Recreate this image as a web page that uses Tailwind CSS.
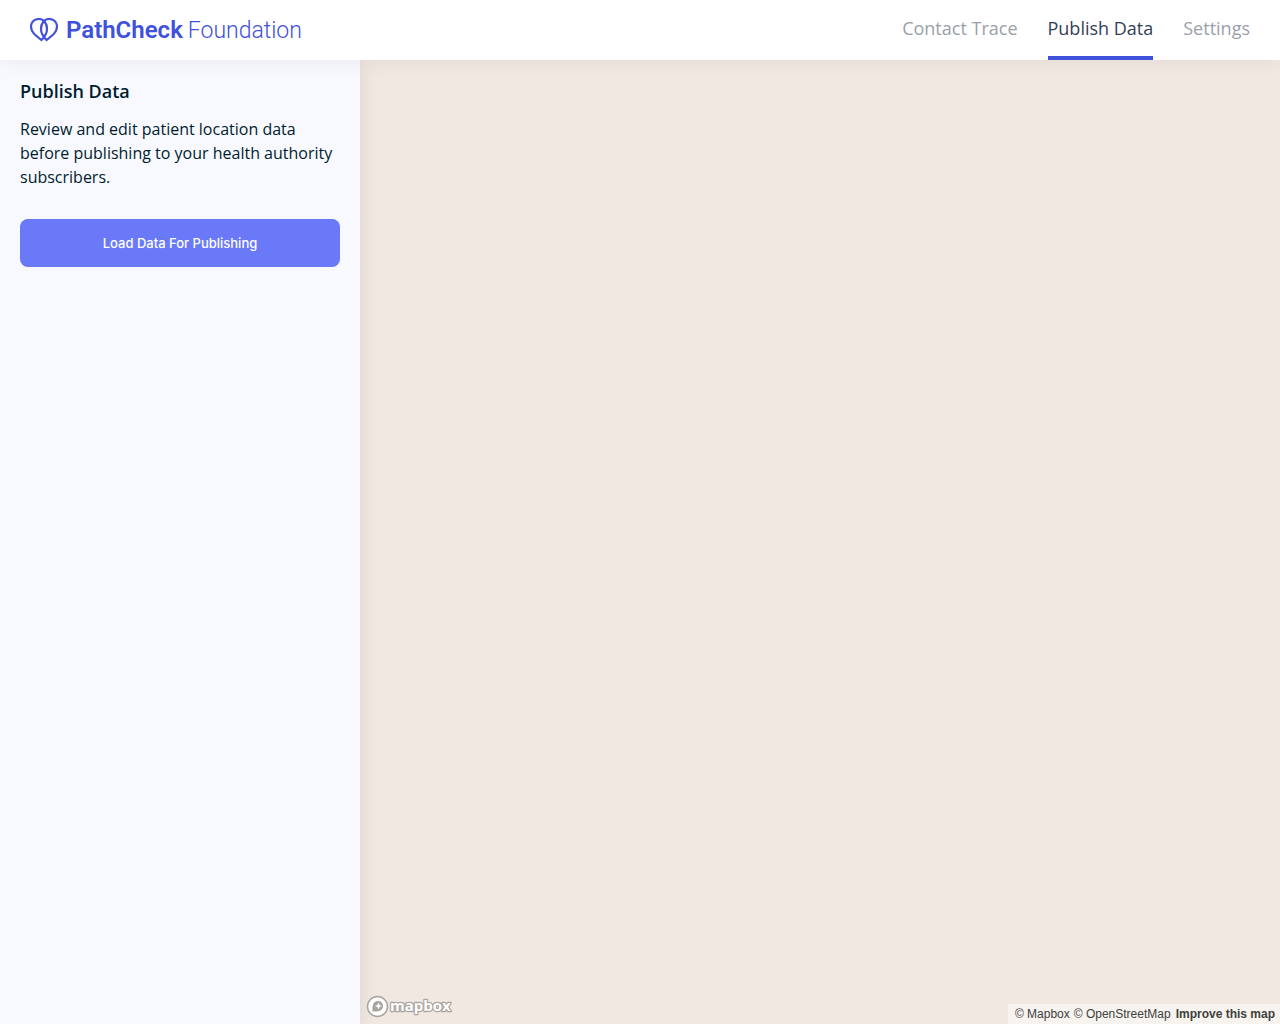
<!DOCTYPE html>
<html lang="en">
<head>
<meta charset="utf-8">
<meta name="viewport" content="width=device-width, initial-scale=1">
<title>PathCheck Foundation</title>
<script src="https://cdn.jsdelivr.net/npm/@tailwindcss/browser@4"></script>
</head>
<body class="flex min-h-screen flex-col bg-[#f8f9ff] font-['Open_Sans',sans-serif] text-[#001d2e]">
  <header class="relative z-20 flex h-15 shrink-0 items-stretch justify-between bg-white px-[30px] shadow-[0_2px_20px_rgba(0,0,0,0.06)]">
    <a href="#" class="flex items-center gap-2 text-[#4051db]" aria-label="PathCheck Foundation">
      <svg class="h-6 w-7" viewBox="0 0 28 24" fill="none" stroke="currentColor" stroke-width="2.200" stroke-linejoin="miter" aria-hidden="true">
        <path d="M11.500 22C5 17 1 14 1 8.500C1 4 4.500 1 9 1C13.500 1 17 5 17 11C17 15.500 14.500 19 11.500 22Z"/>
        <path d="M16.500 22C23 17 27 14 27 8.500C27 4 23.500 1 19 1C14.500 1 11 5 11 11C11 15.500 13.500 19 16.500 22Z"/>
      </svg>
      <span class="flex items-baseline gap-[5px] font-[Roboto,sans-serif] text-[24px] leading-7"><span class="font-semibold">PathCheck</span> <span class="text-[23px] font-light">Foundation</span></span>
    </a>
    <nav class="flex gap-[30px] text-lg text-[#9a9fac]">
      <a href="#" class="flex items-center border-b-4 border-transparent">Contact Trace</a>
      <a href="#" aria-current="page" class="flex items-center border-b-4 border-[#4051db] text-[#333f58]">Publish Data</a>
      <a href="#" class="flex items-center border-b-4 border-transparent">Settings</a>
    </nav>
  </header>
  <div class="flex flex-1">
    <aside class="relative z-10 w-90 shrink-0 bg-[#f8f9ff] px-5 pt-[17px] shadow-[0_2px_20px_rgba(0,0,0,0.09)]">
      <h1 class="text-lg leading-7 font-semibold">Publish Data</h1>
      <p class="mt-3 text-base leading-6">Review and edit patient location data before publishing to your health authority subscribers.</p>
      <button type="button" class="mt-[30px] h-12 w-full rounded-lg bg-[#6979f8] pt-px font-[Inter,sans-serif] text-[13px] font-medium text-white">Load Data For Publishing</button>
    </aside>
    <main class="flex flex-1 items-end justify-between bg-[#f0e8e1]">
      <a href="#" class="z-10 mb-1 ml-1.5" aria-label="Mapbox">
        <svg class="h-[26px] w-[90px]" viewBox="0 0 90 26" aria-hidden="true">
          <circle cx="11.500" cy="12.500" r="10" fill="#fff" stroke="#aaa49e" stroke-width="1.500"/>
          <path d="M6.500 17.500C6 11 7.500 7 12 7C15 7 17 9 17 12C17 16.500 13 18 6.500 17.500Z" fill="#aaa49e"/>
          <path d="M12.500 8.500L13.500 11L16 12L13.500 13L12.500 15.500L11.500 13L9 12L11.500 11Z" fill="#fff"/>
          <text x="24" y="17" class="fill-white stroke-[#aaa49e] font-['Open_Sans',sans-serif] text-[15px] font-bold" stroke-width="2.500" stroke-linejoin="round" paint-order="stroke">mapbox</text>
        </svg>
      </a>
      <div class="flex h-5 items-center gap-[5px] bg-[#f7f3ef] pr-[5px] pl-[7px] font-['Liberation_Sans',sans-serif] text-xs text-[#40403d]">
        <span class="flex gap-1"><a href="#">© Mapbox</a> <a href="#">© OpenStreetMap</a></span>
        <a href="#" class="font-bold">Improve this map</a>
      </div>
    </main>
  </div>
</body>
</html>
